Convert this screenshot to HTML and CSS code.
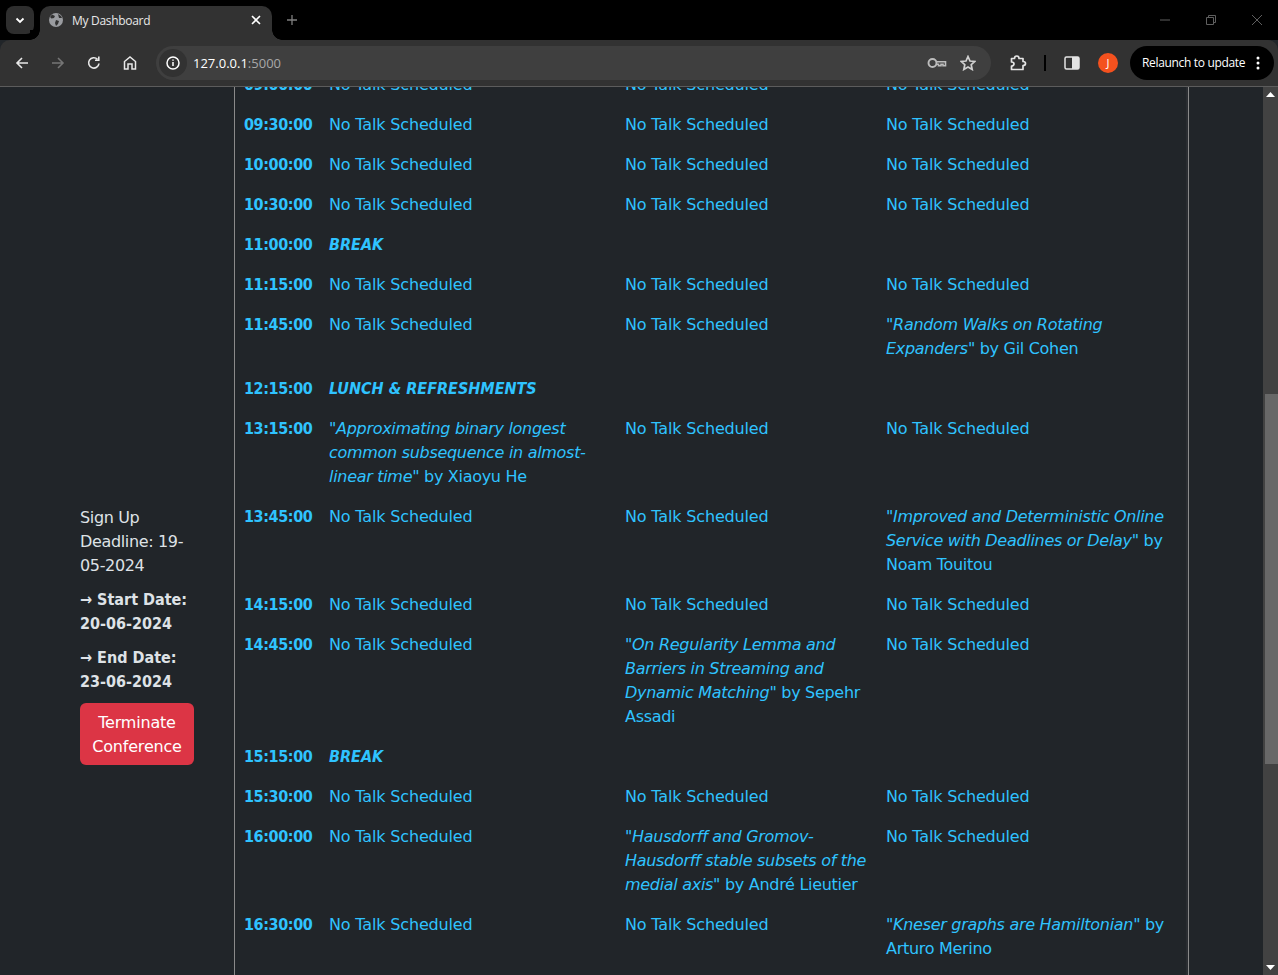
FILE: index.html
```html
<!DOCTYPE html>
<html lang="en">
<head>
<meta charset="utf-8">
<title>My Dashboard</title>
<link rel="stylesheet" href="styles.css">
</head>
<body>
<div class="tabstrip">
  <div class="tabsearch"><svg width="12" height="12" viewBox="0 0 12 12"><path d="M2.500 4.500 6 8l3.500-3.500" fill="none" stroke="#fff" stroke-width="1.800"/></svg></div>
  <div class="tab">
    <svg class="globe" width="16" height="16" viewBox="0 0 16 16"><circle cx="8" cy="8" r="7" fill="#9a9ca0"/><path d="M4 2.500 7 4 6 6 3.500 6.500 2 5ZM8 8l3 1-1 3-2 2-1-3ZM10 2l3 2 1 2-3 0Z" fill="#323232"/></svg>
    <span class="tabtitle">My Dashboard</span>
    <svg class="tabclose" width="10" height="10" viewBox="0 0 10 10"><path d="M1 1l8 8M9 1l-8 8" stroke="#fff" stroke-width="1.600"/></svg>
  </div>
  <svg class="newtab" width="10" height="10" viewBox="0 0 10 10"><path d="M5 0v10M0 5h10" stroke="#7f7f7f" stroke-width="1.300"/></svg>
  <div class="winctl">
    <svg width="12" height="12" viewBox="0 0 12 12"><path d="M1 6h10" stroke="#5f5f5f"/></svg>
    <svg width="12" height="12" viewBox="0 0 12 12"><path d="M1.500 3.500h7v7h-7zM3.500 3.500v-2h7v7h-2" fill="none" stroke="#5f5f5f"/></svg>
    <svg width="12" height="12" viewBox="0 0 12 12"><path d="M1 1l10 10M11 1 1 11" stroke="#5f5f5f"/></svg>
  </div>
</div>
<div class="toolbar">
  <svg class="navicon" width="16" height="16" viewBox="0 0 16 16"><path d="M14 8H3M8 3 3 8l5 5" fill="none" stroke="#e8e8e8" stroke-width="1.600"/></svg>
  <svg class="navicon" width="16" height="16" viewBox="0 0 16 16"><path d="M2 8h11M8 3l5 5-5 5" fill="none" stroke="#757575" stroke-width="1.600"/></svg>
  <svg class="navicon" width="16" height="16" viewBox="0 0 16 16"><path d="M13 8.500A5.200 5.200 0 1 1 11.500 4.200M12.800 1.500v3.800H9" fill="none" stroke="#e8e8e8" stroke-width="1.600"/></svg>
  <svg class="navicon" width="16" height="16" viewBox="0 0 16 16"><path d="M2.500 14V6.500L8 2l5.500 4.500V14H10V9H6v5Z" fill="none" stroke="#e8e8e8" stroke-width="1.500"/></svg>
  <div class="omnibox">
    <div class="siteinfo"><svg width="16" height="16" viewBox="0 0 16 16"><circle cx="8" cy="8" r="6" fill="none" stroke="#fff" stroke-width="1.500"/><path d="M8 7v4M8 4.500v1.200" stroke="#fff" stroke-width="1.500"/></svg></div>
    <span class="url">127.0.0.1<span class="port">:5000</span></span>
    <svg class="key" width="20" height="12" viewBox="0 0 20 12"><circle cx="5.500" cy="6" r="4" fill="none" stroke="#bdbdbd" stroke-width="1.900"/><path d="M9.500 4.700h9v4H16V7.200h-2v1.500h-2.500V7.200h-2" fill="none" stroke="#bdbdbd" stroke-width="1.600"/></svg>
    <svg class="star" width="16" height="16" viewBox="0 0 16 16"><path d="M8 1.500l2 4.500 4.800.5-3.600 3.200 1 4.800L8 12.100l-4.200 2.400 1-4.800L1.200 6.500 6 6Z" fill="none" stroke="#d0d0d0" stroke-width="1.700"/></svg>
  </div>
  <svg class="ext" width="18" height="18" viewBox="0 0 18 18"><path d="M2.500 4.500H5.500C5.500 2.800 6.500 2 7.800 2S10 2.800 10 4.500H14V7.500C15.800 7.500 16.500 8.400 16.500 9.500S15.800 11.500 14 11.500V15.500H2.500V12C4.200 12 5 11 5 10S4.200 8 2.500 8Z" fill="none" stroke="#e4e4e4" stroke-width="1.700" stroke-linejoin="round"/></svg>
  <div class="divider"></div>
  <svg class="panel" width="16" height="16" viewBox="0 0 16 16"><rect x="1" y="2" width="14" height="12" rx="1.500" fill="none" stroke="#e4e4e4" stroke-width="1.500"/><rect x="8" y="2" width="7" height="12" fill="#e4e4e4"/></svg>
  <div class="avatar">J</div>
  <div class="relaunch"><span>Relaunch to update</span><svg width="4" height="14" viewBox="0 0 4 14"><circle cx="2" cy="2" r="1.500" fill="#fff"/><circle cx="2" cy="7" r="1.500" fill="#fff"/><circle cx="2" cy="12" r="1.500" fill="#fff"/></svg></div>
</div>
<div class="viewport">
  <main class="page">
    <aside class="sidebar">
      <p class="plain">Sign Up Deadline: 19-05-2024</p>
      <p><strong>→ Start Date:</strong> <span class="date">20-06-2024</span></p>
      <p><strong>→ End Date:</strong> <span class="date">23-06-2024</span></p>
      <button class="terminate">Terminate Conference</button>
    </aside>
    <section class="schedule">
      <table>
        <colgroup><col class="c-time"><col class="c-a"><col class="c-b"><col class="c-c"></colgroup>
        <tbody>
          <tr><th>09:00:00</th><td>No Talk Scheduled</td><td>No Talk Scheduled</td><td>No Talk Scheduled</td></tr>
          <tr><th>09:30:00</th><td>No Talk Scheduled</td><td>No Talk Scheduled</td><td>No Talk Scheduled</td></tr>
          <tr><th>10:00:00</th><td>No Talk Scheduled</td><td>No Talk Scheduled</td><td>No Talk Scheduled</td></tr>
          <tr><th>10:30:00</th><td>No Talk Scheduled</td><td>No Talk Scheduled</td><td>No Talk Scheduled</td></tr>
          <tr><th>11:00:00</th><td colspan="3"><b><i>BREAK</i></b></td></tr>
          <tr><th>11:15:00</th><td>No Talk Scheduled</td><td>No Talk Scheduled</td><td>No Talk Scheduled</td></tr>
          <tr><th>11:45:00</th><td>No Talk Scheduled</td><td>No Talk Scheduled</td><td class="talk"><i>"Random Walks on Rotating Expanders"</i> by Gil Cohen</td></tr>
          <tr><th>12:15:00</th><td colspan="3"><b><i>LUNCH &amp; REFRESHMENTS</i></b></td></tr>
          <tr><th>13:15:00</th><td class="talk"><i>"Approximating binary longest common subsequence in almost-linear time"</i> by Xiaoyu He</td><td>No Talk Scheduled</td><td>No Talk Scheduled</td></tr>
          <tr><th>13:45:00</th><td>No Talk Scheduled</td><td>No Talk Scheduled</td><td class="talk"><i>"Improved and Deterministic Online Service with Deadlines or Delay"</i> by Noam Touitou</td></tr>
          <tr><th>14:15:00</th><td>No Talk Scheduled</td><td>No Talk Scheduled</td><td>No Talk Scheduled</td></tr>
          <tr><th>14:45:00</th><td>No Talk Scheduled</td><td class="talk"><i>"On Regularity Lemma and Barriers in Streaming and Dynamic Matching"</i> by Sepehr Assadi</td><td>No Talk Scheduled</td></tr>
          <tr><th>15:15:00</th><td colspan="3"><b><i>BREAK</i></b></td></tr>
          <tr><th>15:30:00</th><td>No Talk Scheduled</td><td>No Talk Scheduled</td><td>No Talk Scheduled</td></tr>
          <tr><th>16:00:00</th><td>No Talk Scheduled</td><td class="talk"><i>"Hausdorff and Gromov-Hausdorff stable subsets of the medial axis"</i> by André Lieutier</td><td>No Talk Scheduled</td></tr>
          <tr><th>16:30:00</th><td>No Talk Scheduled</td><td>No Talk Scheduled</td><td class="talk"><i>"Kneser graphs are Hamiltonian"</i> by Arturo Merino</td></tr>
        </tbody>
      </table>
    </section>
    <div class="rightgap"></div>
  </main>
  <div class="scrollbar">
    <svg class="arrow" width="9" height="5" viewBox="0 0 9 5"><path d="M4.500 0 9 5H0Z" fill="#fff"/></svg>
    <div class="track"><div class="thumb"></div></div>
    <svg class="arrow" width="9" height="5" viewBox="0 0 9 5"><path d="M0 0h9L4.500 5Z" fill="#fff"/></svg>
  </div>
</div>
</body>
</html>
```
FILE: styles.css
```css
* { box-sizing: border-box; }
html, body { margin: 0; height: 100%; overflow: hidden; }
body { display: flex; flex-direction: column; height: 975px; background: #212529; font-family: "DejaVu Sans", sans-serif; }

.tabstrip { height: 40px; flex: none; background: #000; display: flex; align-items: flex-start; padding: 6px 0 0 6px; }
.tabsearch { width: 28px; height: 28px; background: #2e2e2e; border-radius: 8px; display: flex; align-items: center; justify-content: center; }
.tab { position: relative; width: 232px; height: 34px; margin-left: 6px; background: #323232; border-radius: 10px 10px 0 0; display: flex; align-items: center; padding: 0 11px 6px 8px; }
.tab::before, .tab::after { content: ""; position: absolute; bottom: 0; width: 10px; height: 10px; }
.tab::before { left: -10px; background: radial-gradient(circle at 0 0, #000 9.500px, #323232 10px); }
.tab::after { right: -10px; background: radial-gradient(circle at 100% 0, #000 9.500px, #323232 10px); }
.tabtitle { font: 12px "Open Sans", sans-serif; letter-spacing: -0.3px; color: #e8e8e8; margin-left: 8px; flex: 1; }
.newtab { margin: 9px 0 0 15px; }
.winctl { margin-left: auto; display: flex; gap: 34px; padding: 8px 15px 0 0; }

.toolbar { height: 47px; flex: none; background: #323232; border-bottom: 1px solid #5c5c5c; border-radius: 10px 10px 0 0; display: flex; align-items: center; padding: 0 4px 1px 14px; }
.navicon { margin-right: 20px; flex: none; }
.navicon:nth-child(4) { margin-right: 18px; }
.omnibox { width: 836px; height: 34px; background: #3f3f3f; border-radius: 17px; display: flex; align-items: center; padding: 0 15px 0 3px; }
.siteinfo { width: 28px; height: 28px; border-radius: 50%; background: #323232; display: flex; align-items: center; justify-content: center; }
.url { font: 13px "Open Sans", sans-serif; color: #fff; margin-left: 6px; flex: 1; }
.port { color: #a8a8a8; }
.key { margin-right: 13px; }
.ext { margin-left: 18px; flex: none; }
.divider { width: 2px; height: 16px; background: #000; margin: 0 18px 0 17px; flex: none; }
.panel { flex: none; }
.avatar { width: 20px; height: 20px; border-radius: 50%; background: #f4511e; color: #fff; font: 11px "Open Sans", sans-serif; display: flex; align-items: center; justify-content: center; margin: 0 12px 0 18px; flex: none; }
.relaunch { width: 144px; height: 34px; background: #000; border-radius: 17px; color: #fff; font: 12px "Open Sans", sans-serif; letter-spacing: -0.33px; display: flex; align-items: center; justify-content: space-between; padding: 0 14px 0 12px; flex: none; }

.viewport { flex: 1; min-height: 0; display: flex; overflow: hidden; }
.page { flex: 1; display: flex; align-items: flex-start; min-width: 0; height: 100%; color: #dee2e6; font-size: 16px; line-height: 24px; }
.sidebar { width: 234px; flex: none; padding: 419px 40px 0 80px; }
.sidebar p { margin: 0 0 10px; }
.sidebar .plain { letter-spacing: -0.35px; }
.sidebar strong, .date { font-weight: 700; font-stretch: condensed; }
.terminate { display: block; width: 114px; height: 62px; margin-top: -1px; background: #dc3545; color: #fff; border: 0; border-radius: 6px; font: inherit; letter-spacing: -0.2px; padding: 8px 12px 6px; }
.schedule { width: 955px; flex: none; height: 100%; border-left: 1px solid #8a8a8a; border-right: 1px solid #8a8a8a; box-shadow: inset -2px 0 0 #2a2d31; overflow: hidden; }
table { border-collapse: collapse; table-layout: fixed; width: 945px; margin-top: -22px; color: #2fc3ff; }
.c-time { width: 86px; } .c-a { width: 296px; } .c-b { width: 261px; } .c-c { width: 302px; }
th, td { padding: 8px; text-align: left; vertical-align: top; font-weight: 400; letter-spacing: -0.16px; }
th { font-weight: 700; font-stretch: condensed; letter-spacing: -0.4px; padding-left: 9px; }
td b { font-stretch: condensed; letter-spacing: 0; }
td.talk { letter-spacing: -0.3px; }
.rightgap { flex: 1; }

.scrollbar { width: 15px; flex: none; background: #424242; display: flex; flex-direction: column; align-items: center; padding: 5px 0; }
.arrow { flex: none; }
.track { flex: 1; width: 100%; padding: 297px 0 0 2px; }
.thumb { height: 370px; background: #686868; }
```
